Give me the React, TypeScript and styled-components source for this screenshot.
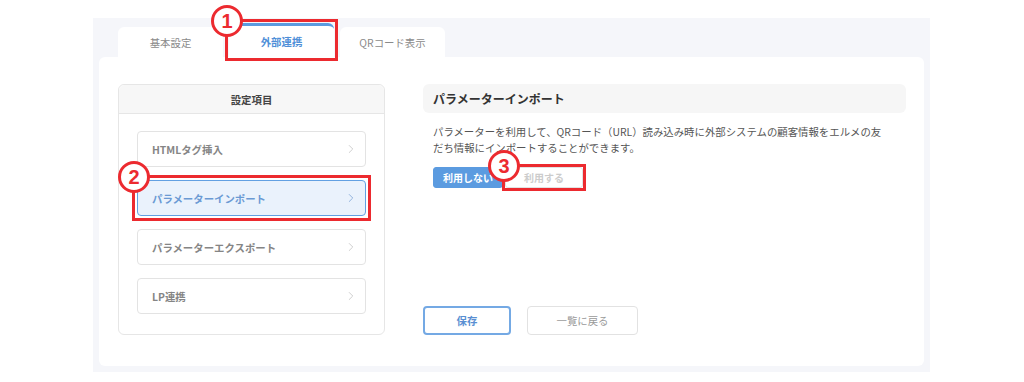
import React from "react";
import styled, {createGlobalStyle} from "styled-components";
import {ChevronRight} from "lucide-react";

const GlobalStyle = createGlobalStyle`
  body {
    margin: 0;
    background: #ffffff;
    font-family: "Noto Sans CJK JP", "Noto Sans", sans-serif;
  }
`

const tabs = ["基本設定", "外部連携", "QRコード表示"]
const menu = ["HTMLタグ挿入", "パラメーターインポート", "パラメーターエクスポート", "LP連携"]

type MarkProps = { num: number, outset: number, children: React.ReactNode }
const Mark: React.FC<MarkProps> = ({num, outset, children}) => (
    <MarkWrap>
        {children}
        <MarkBox $outset={outset}>
            <Badge>{num}</Badge>
        </MarkBox>
    </MarkWrap>
)

const App: React.FC = () => {
    return (
        <Page>
            <GlobalStyle/>
            <Panel>
                <TabBar>
                    {tabs.map((t, i) => i === 1
                        ? <Mark key={t} num={1} outset={4}><Tab $active>{t}</Tab></Mark>
                        : <Tab key={t}>{t}</Tab>)}
                </TabBar>
                <Card>
                    <SideMenu>
                        <SideHeader>設定項目</SideHeader>
                        <MenuList>
                            {menu.map((m, i) => {
                                const item = <MenuItem key={m} $active={i === 1}>
                                    <span>{m}</span>
                                    <ChevronRight size={14} strokeWidth={1.4}/>
                                </MenuItem>
                                return i === 1 ? <Mark key={m} num={2} outset={5}>{item}</Mark> : item
                            })}
                        </MenuList>
                    </SideMenu>
                    <Content>
                        <div>
                            <SectionTitle>パラメーターインポート</SectionTitle>
                            <Description>
                                パラメーターを利用して、QRコード（URL）読み込み時に外部システムの顧客情報をエルメの友だち情報にインポートすることができます。
                            </Description>
                            <Toggle>
                                <ToggleButton $on>利用しない</ToggleButton>
                                <Mark num={3} outset={3}>
                                    <ToggleButton>利用する</ToggleButton>
                                </Mark>
                            </Toggle>
                        </div>
                        <Footer>
                            <ActionButton $primary>保存</ActionButton>
                            <ActionButton>一覧に戻る</ActionButton>
                        </Footer>
                    </Content>
                </Card>
            </Panel>
        </Page>
    )
}

const Page = styled.div`
  padding: 18px 0 0 93px;
`

const Panel = styled.div`
  width: 837px;
  height: 354px;
  box-sizing: border-box;
  background: #f5f6fa;
  padding: 0 6px 6px 6px;
  display: flex;
  flex-direction: column;
`

const TabBar = styled.div`
  height: 39px;
  display: flex;
  align-items: flex-end;
  gap: 6px;
  padding-left: 19px;
`

const Tab = styled.div<{ $active?: boolean }>`
  width: 105px;
  height: ${p => p.$active ? "34px" : "30px"};
  box-sizing: border-box;
  background: #ffffff;
  border-radius: 6px 6px 0 0;
  border-top: ${p => p.$active ? "3px solid #5b9be0" : "none"};
  display: flex;
  align-items: center;
  justify-content: center;
  font-size: 10.4px;
  font-weight: ${p => p.$active ? 700 : 400};
  color: ${p => p.$active ? "#4f8fd8" : "#8a8a8a"};
`

const Card = styled.div`
  flex: 1;
  background: #ffffff;
  border-radius: 6px;
  box-sizing: border-box;
  padding: 27px 18px 31px 19px;
  display: flex;
  gap: 38px;
`

const SideMenu = styled.div`
  width: 267px;
  flex-shrink: 0;
  border: 1px solid #e6e6e6;
  border-radius: 6px;
  box-sizing: border-box;
`

const SideHeader = styled.div`
  height: 29px;
  box-sizing: border-box;
  background: #f7f7f7;
  border-bottom: 1px solid #e6e6e6;
  border-radius: 6px 6px 0 0;
  display: flex;
  align-items: center;
  justify-content: center;
  font-size: 10.4px;
  font-weight: 700;
  color: #444;
`

const MenuList = styled.div`
  padding: 17px 18px 0 18px;
  display: flex;
  flex-direction: column;
  gap: 13px;
`

const MenuItem = styled.div<{ $active?: boolean }>`
  height: 36px;
  box-sizing: border-box;
  border: 1px solid ${p => p.$active ? "#62a0e2" : "#e3e3e3"};
  background: ${p => p.$active ? "#eaf2fc" : "#ffffff"};
  border-radius: 4px;
  padding: 0 7px 0 14px;
  display: flex;
  align-items: center;
  justify-content: space-between;
  font-size: 10.4px;
  font-weight: 700;
  color: ${p => p.$active ? "#6a9ad4" : "#858585"};

  svg {
    color: ${p => p.$active ? "#7fa6d6" : "#c4c4c4"};
  }
`

const Content = styled.div`
  flex: 1;
  display: flex;
  flex-direction: column;
  justify-content: space-between;
`

const SectionTitle = styled.div`
  height: 29px;
  background: #f6f6f6;
  border-radius: 6px;
  padding-left: 10px;
  display: flex;
  align-items: center;
  font-size: 12px;
  font-weight: 700;
  color: #333;
`

const Description = styled.p`
  margin: 11px 0 0 0;
  padding-left: 10px;
  max-width: 456px;
  font-size: 10.4px;
  line-height: 16px;
  color: #555;
`

const Toggle = styled.div`
  margin-top: 11px;
  padding-left: 10px;
  display: flex;
  gap: 2px;
`

const ToggleButton = styled.div<{ $on?: boolean }>`
  height: 21px;
  width: ${p => p.$on ? "70px" : "78px"};
  box-sizing: border-box;
  border-radius: 3px;
  border: 1px solid ${p => p.$on ? "#5b9be0" : "#e2e2e2"};
  background: ${p => p.$on ? "#5b9be0" : "#ffffff"};
  color: ${p => p.$on ? "#ffffff" : "#cccccc"};
  font-size: 10px;
  font-weight: 700;
  display: flex;
  align-items: center;
  justify-content: center;
`

const Footer = styled.div`
  display: flex;
  gap: 16px;
`

const ActionButton = styled.div<{ $primary?: boolean }>`
  height: 29px;
  width: ${p => p.$primary ? "88px" : "111px"};
  box-sizing: border-box;
  border-radius: 4px;
  border: ${p => p.$primary ? "2px solid #74a9e4" : "1px solid #e2e2e2"};
  color: ${p => p.$primary ? "#5a8fd2" : "#9a9a9a"};
  font-size: 10.4px;
  font-weight: ${p => p.$primary ? 700 : 400};
  display: flex;
  align-items: center;
  justify-content: center;
`

const MarkWrap = styled.div`
  position: relative;
`

const MarkBox = styled.div<{ $outset: number }>`
  position: absolute;
  inset: ${p => -p.$outset}px;
  border: 3px solid #ec2a2f;
  pointer-events: none;
  z-index: 2;
`

const Badge = styled.div`
  position: absolute;
  left: -17px;
  top: -17px;
  width: 32px;
  height: 32px;
  box-sizing: border-box;
  border-radius: 50%;
  border: 3px solid #ec2a2f;
  background: #ffffff;
  color: #ec2a2f;
  font-family: "Liberation Sans", Arial, sans-serif;
  font-size: 20px;
  font-weight: 700;
  display: flex;
  align-items: center;
  justify-content: center;
`

export default App;
